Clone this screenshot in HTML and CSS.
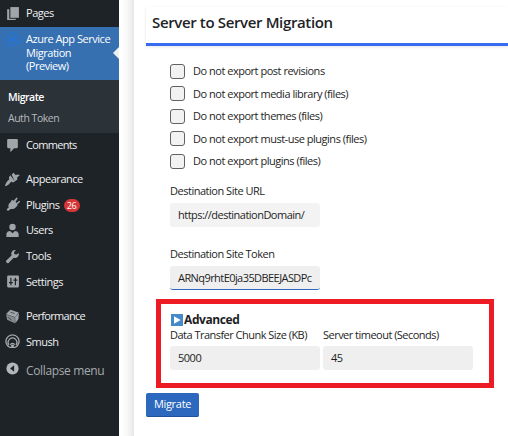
FILE: index.html
```html
<!DOCTYPE html>
<html lang="en">
<head>
<meta charset="utf-8">
<title>Server to Server Migration</title>
<link rel="stylesheet" href="styles.css">
</head>
<body>
<div class="app">
  <nav class="sidebar">
    <a class="item pages"><svg class="icon" viewBox="0 0 14 14"><path d="M5 1h8v10H5z"/><path d="M4 3H2v10h8v-1.200H4z"/></svg><span>Pages</span></a>
    <a class="item current"><svg class="icon azure" viewBox="0 0 16 16"><circle cx="8" cy="8" r="7"/><path d="M3 4.500l4 3.500 4-4M7 8l-2.500 5M7 8l5 3.500M11 4l1 7.500"/><circle class="dot" cx="7" cy="8" r="1.300"/></svg><span>Azure App Service<br>Migration<br>(Preview)</span></a>
    <div class="submenu"><a class="on">Migrate</a><a>Auth Token</a></div>
    <a class="item comments"><svg class="icon" viewBox="0 0 14 14"><path d="M3 1h8q1 0 1 1v6.500q0 1-1 1H8.500L5 13.300V9.500H3q-1 0-1-1V2q0-1 1-1z"/></svg><span class="tight">Comments</span></a>
    <a class="item group"><svg class="icon" viewBox="0 0 14 14"><path d="M6.200 2.300L8.100.8l1.700 2.100 2.500-.5 1.500.6-2.500 2.200.3 1.700-2.500 2z"/><path d="M5 3l4.300 5.800-2 1-1.400-.9C4.300 10.900 2.600 12.800.6 13.200l-.6-.8C1.100 10 2.200 8.300 3.900 7.100L3.700 5z"/></svg><span>Appearance</span></a>
    <a class="item"><svg class="icon" viewBox="0 0 14 14"><path d="M8.100 3.600L10.500.7q1-.5 1.200.6L9.800 4.700l1 .9 2.500-2q1.100 0 .5 1.100l-2.500 2.600.4.700-1.100 1c-1.500 2-3.500 2.700-5.400 2.100l-2 1.800-1.500-.5.1-1.100 1.700-1.500C2.500 7.500 3.700 5.900 5.400 4.600L6.300 2.500z"/></svg><span>Plugins</span><b class="badge">26</b></a>
    <a class="item"><svg class="icon" viewBox="0 0 14 14"><circle cx="7" cy="3.800" r="3"/><path d="M1.300 13V9.700Q2.200 7.400 4.800 7.400L7 9.500l2.200-2.100q2.600 0 3.500 2.300V13z"/></svg><span>Users</span></a>
    <a class="item"><svg class="icon" viewBox="0 0 14 14"><path d="M12.900 3.800a3.700 3.700 0 0 1-4.800 4.400L3.300 13q-1 .7-1.900-.3t-.2-1.900L6.100 6A3.700 3.700 0 0 1 10.200.9L8.400 3l.5 1.800 1.900.4z"/></svg><span>Tools</span></a>
    <a class="item"><svg class="icon" viewBox="0 0 14 14"><path d="M3 1.500h9q1 0 1 1v9q0 1-1 1H3q-1 0-1-1v-9q0-1 1-1z"/><path class="cut" d="M5.500 3.500v7M3.700 8h3.600M9.700 3.500v7M7.900 5.700h3.600"/></svg><span>Settings</span></a>
    <a class="item group"><svg class="icon" viewBox="0 0 14 14"><path d="M5 .8l7.800 2.500L9.400 7.600 1 4.700z"/><path class="side" d="M1 5l8.200 2.900v5.500L2 10z"/><path d="M9.400 7.700l3.700-4-.6 5.700-2.800 3.800z"/><path class="cut thin" d="M5 3l4 1.200M3 7.500l3 3"/></svg><span class="tight">Performance</span></a>
    <a class="item"><svg class="icon smush" viewBox="0 0 16 16"><path d="M5 14.200A7 7 0 1 1 11 14.200M4.200 11.500A4.600 4.600 0 1 1 11.800 11.500"/><path d="M5.700 11.500A2.500 2.500 0 0 1 10.300 11.500M5 14.200h6"/><path class="solid" d="M6.300 12.300a1.800 1.800 0 0 1 3.400 0L9 14H7z"/></svg><span>Smush</span></a>
    <a class="item collapse"><svg class="icon" viewBox="0 0 14 14"><circle cx="7" cy="7" r="5.700"/><path class="arrow" d="M8.500 4v6L4.700 7z"/></svg><span>Collapse menu</span></a>
  </nav>
  <div class="gutter"></div>
  <main class="panel">
    <h1>Server to Server Migration</h1>
    <div class="checks">
      <label><i></i>Do not export post revisions</label>
      <label><i></i>Do not export media library (files)</label>
      <label><i></i>Do not export themes (files)</label>
      <label><i></i>Do not export must-use plugins (files)</label>
      <label><i></i>Do not export plugins (files)</label>
    </div>
    <div class="field"><label>Destination Site URL</label><div class="input url">https://destinationDomain/</div></div>
    <div class="field token"><label>Destination Site Token</label><div class="input focus">ARNq9rhtE0ja35DBEEJASDPc</div></div>
    <section class="advanced">
      <h2><svg viewBox="0 0 12 12"><path class="box" d="M0 0h12v12H0z"/><path class="play" d="M3 2.200v7.600L9.700 6z"/></svg><span>Advanced</span></h2>
      <div class="pair">
        <div><label>Data Transfer Chunk Size (KB)</label><div class="input">5000</div></div>
        <div><label>Server timeout (Seconds)</label><div class="input">45</div></div>
      </div>
    </section>
    <button>Migrate</button>
  </main>
</div>
</body>
</html>
```
FILE: styles.css
```css
* { box-sizing: border-box; }
body { margin: 0; background: #fff; font: 11px/14px "Open Sans", "Noto Sans", sans-serif; letter-spacing: -.48px; color: #1e1e1e; }
.app { display: flex; width: 508px; height: 436px; overflow: hidden; }
.sidebar { width: 119px; flex: none; background: #1d2327; color: #f0f0f1; font-size: 11px; letter-spacing: -.47px; }
.item { display: flex; align-items: center; height: 25.600px; padding: 0 0 1px 5px; white-space: nowrap; }
.item span { margin-left: 6px; }
.item .tight { letter-spacing: -.68px; }
.icon { width: 15px; height: 15px; flex: none; fill: #a0a5aa; }
.pages { height: 27px; }
.current { position: relative; height: 53px; background: #3670b1; color: #fff; align-items: flex-start; padding-top: 5px; line-height: 13.500px; }
.current::after { content: ""; position: absolute; right: 0; top: 20px; border: 6px solid transparent; border-right-color: #f0f0f1; border-left: 0; }
.item .azure { fill: none; stroke: #1f78e0; stroke-width: 1; }
.azure .dot { fill: #1f78e0; }
.submenu { height: 53px; background: #2c3338; padding: 7px 8px 0; display: flex; flex-direction: column; font-size: 10.500px; line-height: 20.500px; color: #b4b9be; letter-spacing: -.6px; }
.submenu a { letter-spacing: -.48px; }
.submenu .on { color: #fff; font-weight: 600; }
.comments { height: 25px; }
.group { margin-top: 9px; }
.badge { background: #d63638; color: #fff; font-size: 9px; font-weight: 400; line-height: 13px; height: 13px; width: 16px; border-radius: 7px; text-align: center; margin: 2px 0 0 4px; letter-spacing: -.3px; }
.cut { fill: none; stroke: #1d2327; stroke-width: 1.100; }
.thin { stroke-width: .6; }
.side { fill: #858b90; }
.item .smush { fill: none; stroke: #a7aaad; stroke-width: 1.400; }
.smush .solid { fill: #a7aaad; stroke: none; }
.collapse { height: 33px; font-size: 12px; color: #a7aaad; letter-spacing: -.36px; }
.collapse .icon { margin-top: -6px; fill: #b4b7b9; }
.arrow { fill: #1d2327; }
.gutter { width: 15px; flex: none; background: linear-gradient(90deg, #fff 15%, #f8f8f8 55%, #e7e7e7); }
.panel { flex: 1; padding: 7px 0 0 12px; }
h1 { margin: 0; width: 362px; height: 39px; border-bottom: 3px solid #396bf0; padding: 5px 6px; font-size: 15px; line-height: 20px; font-weight: 600; box-shadow: 0 1px 3px #0000001a; color: #1d2327; white-space: nowrap; letter-spacing: -.36px; }
.checks { padding: 14px 0 0 24px; }
.checks label { display: flex; align-items: center; height: 22.500px; white-space: nowrap; }
.checks i { width: 15px; height: 15px; border: 1px solid #616161; border-radius: 3px; background: #f2f2f2; margin-right: 8px; }
.field { margin: 11px 0 0 24px; height: 43px; }
.field.token { margin-top: 20px; }
.field label, .pair label { display: block; height: 18px; line-height: 14px; white-space: nowrap; }
.field label { height: 19px; }
.pair label { letter-spacing: -.52px; }
.input { width: 150px; height: 24px; line-height: 23px; padding-left: 8px; background: #efefef; border-radius: 3px; white-space: nowrap; }
.url { background: #f3f3f3; letter-spacing: -.52px; }
.focus { border-bottom: 1px solid #2c69be; letter-spacing: -.57px; }
.advanced { width: 338px; height: 89px; margin: 9px 0 0 10px; border: 5px solid #ed1c24; padding: 9px 0 0 9px; }
h2 { display: flex; align-items: center; margin: 0; height: 15px; font-size: 12px; font-weight: 700; letter-spacing: -.4px; }
h2 svg { width: 12px; height: 12px; margin: 0 1px; }
.box { fill: #468bc9; }
.play { fill: #fff; }
.pair { display: flex; gap: 3px; }
button { display: block; width: 53px; height: 24px; margin-top: 5px; padding: 0; border: 0; border-bottom: 1px solid #205099; border-radius: 2px; background: #2c69be; color: #fff; font: inherit; letter-spacing: -.3px; }
```
